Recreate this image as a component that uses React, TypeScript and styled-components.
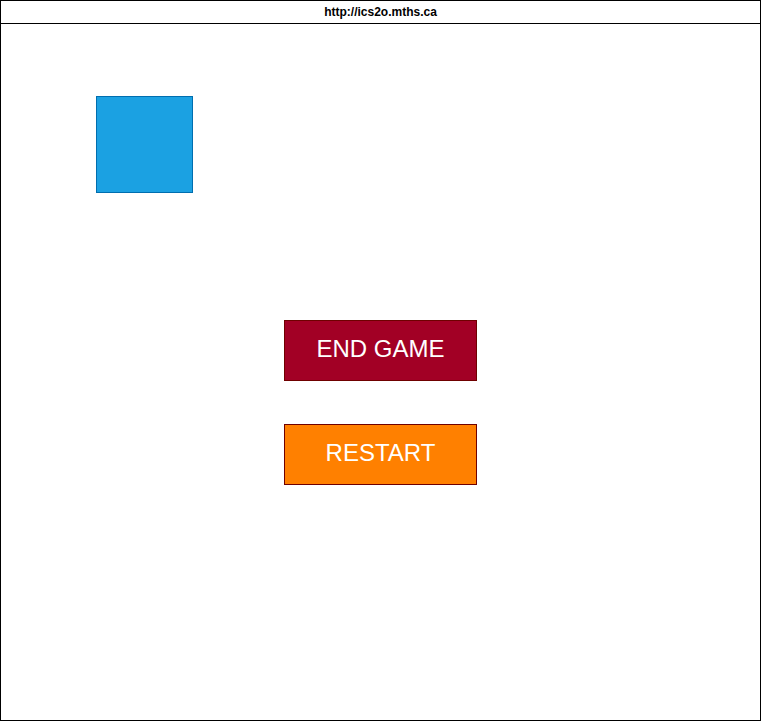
import React from "react";
import styled, { createGlobalStyle } from "styled-components";

const Global = createGlobalStyle`
  html, body { margin: 0; padding: 0; background: #ffffff; }
  * { box-sizing: border-box; }
`;

const Frame = styled.div`
  width: 761px;
  height: 721px;
  border: 1px solid #000000;
  display: flex;
  flex-direction: column;
  font-family: "Liberation Sans", Arial, sans-serif;
  background: #ffffff;
`;

const TitleBar = styled.div`
  height: 23px;
  border-bottom: 1px solid #000000;
  display: flex;
  align-items: center;
  justify-content: center;
  font-size: 12px;
  font-weight: bold;
  color: #000000;
  flex-shrink: 0;
`;

const Canvas = styled.div`
  flex: 1;
  display: flex;
  flex-direction: column;
`;

const Sprite = styled.div`
  width: 97px;
  height: 97px;
  margin: 72px 0 0 95px;
  background: #1ba1e2;
  border: 1px solid #006eaf;
`;

const Menu = styled.div`
  display: flex;
  flex-direction: column;
  align-items: center;
  gap: 43px;
  margin-top: 127px;
`;

const Button = styled.div<{ $fill: string; $edge: string }>`
  width: 193px;
  height: 61px;
  background: ${(p) => p.$fill};
  border: 1px solid ${(p) => p.$edge};
  color: #ffffff;
  font-size: 24px;
  display: flex;
  align-items: center;
  justify-content: center;
  padding-bottom: 3px;
`;

export default function App() {
  return (
    <>
      <Global />
      <Frame>
        <TitleBar>http://ics2o.mths.ca</TitleBar>
        <Canvas>
          <Sprite />
          <Menu>
            <Button $fill="#a20025" $edge="#6f0000">END GAME</Button>
            <Button $fill="#ff8000" $edge="#6f0000">RESTART</Button>
          </Menu>
        </Canvas>
      </Frame>
    </>
  );
}
